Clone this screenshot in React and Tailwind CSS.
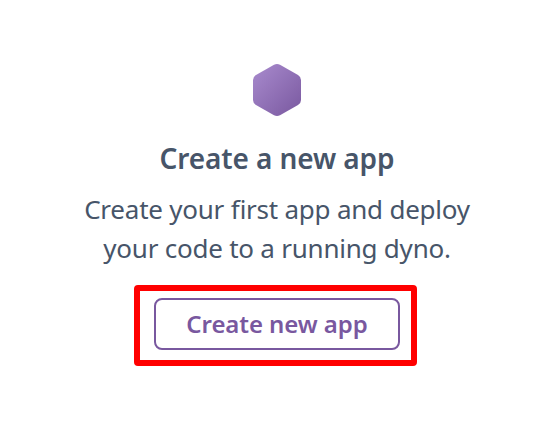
export default function App() {
  return (
    <main className="flex h-[436px] w-[554px] flex-col items-center bg-white pt-[63px] font-['Noto_Sans','Open_Sans',sans-serif] text-[#475569]">
      <svg width="50" height="54" viewBox="0 0 50 54" className="shrink-0">
        <defs>
          <linearGradient id="hex" x1="0" y1="0" x2="1" y2="1">
            <stop offset="0" stopColor="#a98bce" />
            <stop offset="1" stopColor="#79589f" />
          </linearGradient>
        </defs>
        <path fill="url(#hex)" d="M22 1.8Q25 .2 28 1.8L46 12Q49 13.8 49 17V37Q49 40.2 46 42L28 52.2Q25 53.8 22 52.2L4 42Q1 40.2 1 37V17Q1 13.8 4 12Z" />
      </svg>
      <h1 className="mt-[21px] h-10 whitespace-nowrap text-[28px] leading-10 font-semibold tracking-[-0.1px]">Create a new app</h1>
      <p className="mt-3 text-center text-[26px] leading-[39px] tracking-[-0.23px] whitespace-nowrap [font-feature-settings:'liga'_1]">
        Create your first app and deploy<br />your code to a running dyno.
      </p>
      <div className="mt-[17px] mr-[3px] flex h-[81px] w-[283px] items-start justify-center rounded-[4px] border-[6px] border-[#ff0000] pt-[7px] pl-[3px]">
        <button className="h-[52px] w-[246px] rounded-lg border-2 border-[#79589f] text-[24px] font-semibold tracking-[-0.08px] whitespace-nowrap text-[#79589f]">Create new app</button>
      </div>
    </main>
  );
}
